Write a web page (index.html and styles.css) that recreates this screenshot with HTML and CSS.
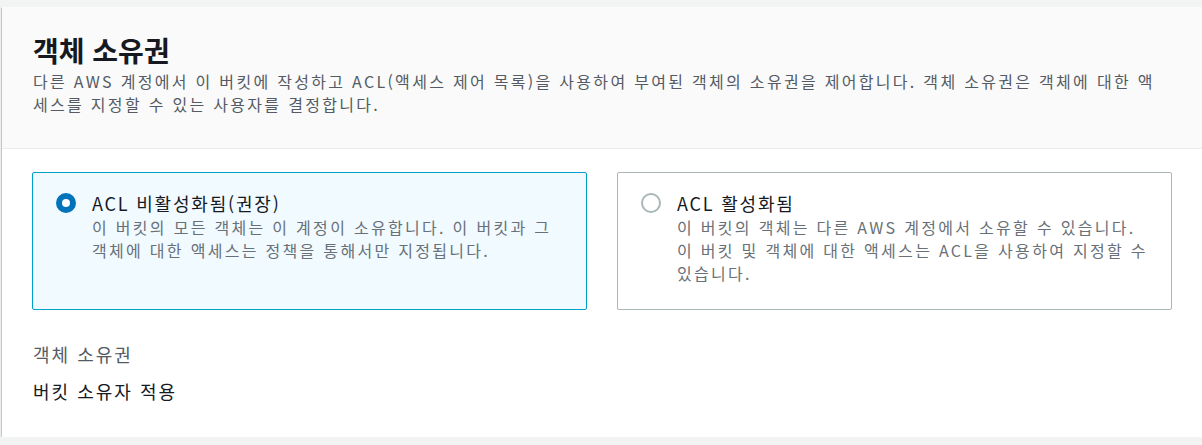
FILE: index.html
```html
<!DOCTYPE html>
<html lang="ko">
<head>
  <meta charset="UTF-8" />
  <meta name="viewport" content="width=device-width, initial-scale=1" />
  <title>객체 소유권</title>
  <link rel="stylesheet" href="styles.css">
</head>
<body>

<div class="panel">
  <div class="panel-header">
    <h2>객체 소유권</h2>
    <p class="panel-desc">다른 AWS 계정에서 이 버킷에 작성하고 ACL(액세스 제어 목록)을 사용하여 부여된 객체의 소유권을 제어합니다. 객체 소유권은 객체에 대한 액<br>세스를 지정할 수 있는 사용자를 결정합니다.</p>
  </div>

  <div class="panel-body">
    <div class="tiles">
      <label class="tile selected">
        <span class="radio"></span>
        <span class="tile-text">
          <span class="tile-title">ACL 비활성화됨(권장)</span>
          <span class="tile-desc">이 버킷의 모든 객체는 이 계정이 소유합니다. 이 버킷과 그<br>객체에 대한 액세스는 정책을 통해서만 지정됩니다.</span>
        </span>
      </label>
      <label class="tile">
        <span class="radio"></span>
        <span class="tile-text">
          <span class="tile-title">ACL 활성화됨</span>
          <span class="tile-desc">이 버킷의 객체는 다른 AWS 계정에서 소유할 수 있습니다.<br>이 버킷 및 객체에 대한 액세스는 ACL을 사용하여 지정할 수<br>있습니다.</span>
        </span>
      </label>
    </div>

    <div class="field">
      <div class="field-label">객체 소유권</div>
      <div class="field-value">버킷 소유자 적용</div>
    </div>
  </div>
</div>

</body>
</html>
```

FILE: styles.css
```css
html, body {
  margin: 0;
  padding: 0;
}
body {
  background: #f2f3f3;
  font-family: "Noto Sans CJK KR", "Noto Sans", sans-serif;
  color: #16191f;
  padding: 7px 0 0 2px;
  overflow: hidden;
}
.panel {
  width: 1200px;
  background: white;
  box-shadow: 0 1px 1px 0 rgba(0,28,36,0.3), 1px 1px 1px 0 rgba(0,28,36,0.15), -1px 1px 1px 0 rgba(0,28,36,0.15);
}
.panel-header {
  background: #fafafa;
  border-bottom: 1px solid #eaeded;
  padding: 25px 30px 32px 31px;
}
h2 {
  margin: 0;
  font-size: 28px;
  line-height: 36px;
  font-weight: bold;
}
.panel-desc {
  margin: 2px 0 0;
  font-size: 16px;
  line-height: 23px;
  letter-spacing: 2.3px;
  color: #545b64;
  white-space: nowrap;
}
.panel-body {
  padding: 23px 30px 33px 30px;
}
.tiles {
  display: grid;
  grid-template-columns: 1fr 1fr;
  gap: 30px;
}
.tile {
  display: flex;
  gap: 16px;
  height: 138px;
  box-sizing: border-box;
  padding: 17px 23px;
  border: 1px solid #aab7b8;
  border-radius: 2px;
  cursor: pointer;
}
.tile.selected {
  border-color: #00a1c9;
  background: #f1faff;
}
.radio {
  flex: none;
  width: 20px;
  height: 20px;
  margin-top: 3px;
  box-sizing: border-box;
  border: 2px solid #aab7b8;
  border-radius: 50%;
  background: white;
}
.tile.selected .radio {
  border: 6px solid #0073bb;
}
.tile-text {
  display: flex;
  flex-direction: column;
  white-space: nowrap;
}
.tile-title {
  font-size: 18px;
  line-height: 26px;
  letter-spacing: 1.8px;
}
.tile-desc {
  font-size: 16px;
  line-height: 23px;
  letter-spacing: 2.3px;
  color: #687078;
}
.field {
  margin-top: 31px;
  padding-left: 1px;
}
.field-label {
  font-size: 18px;
  line-height: 26px;
  letter-spacing: 2px;
  color: #545b64;
}
.field-value {
  margin-top: 11px;
  font-size: 18px;
  line-height: 26px;
  letter-spacing: 2px;
}
```
